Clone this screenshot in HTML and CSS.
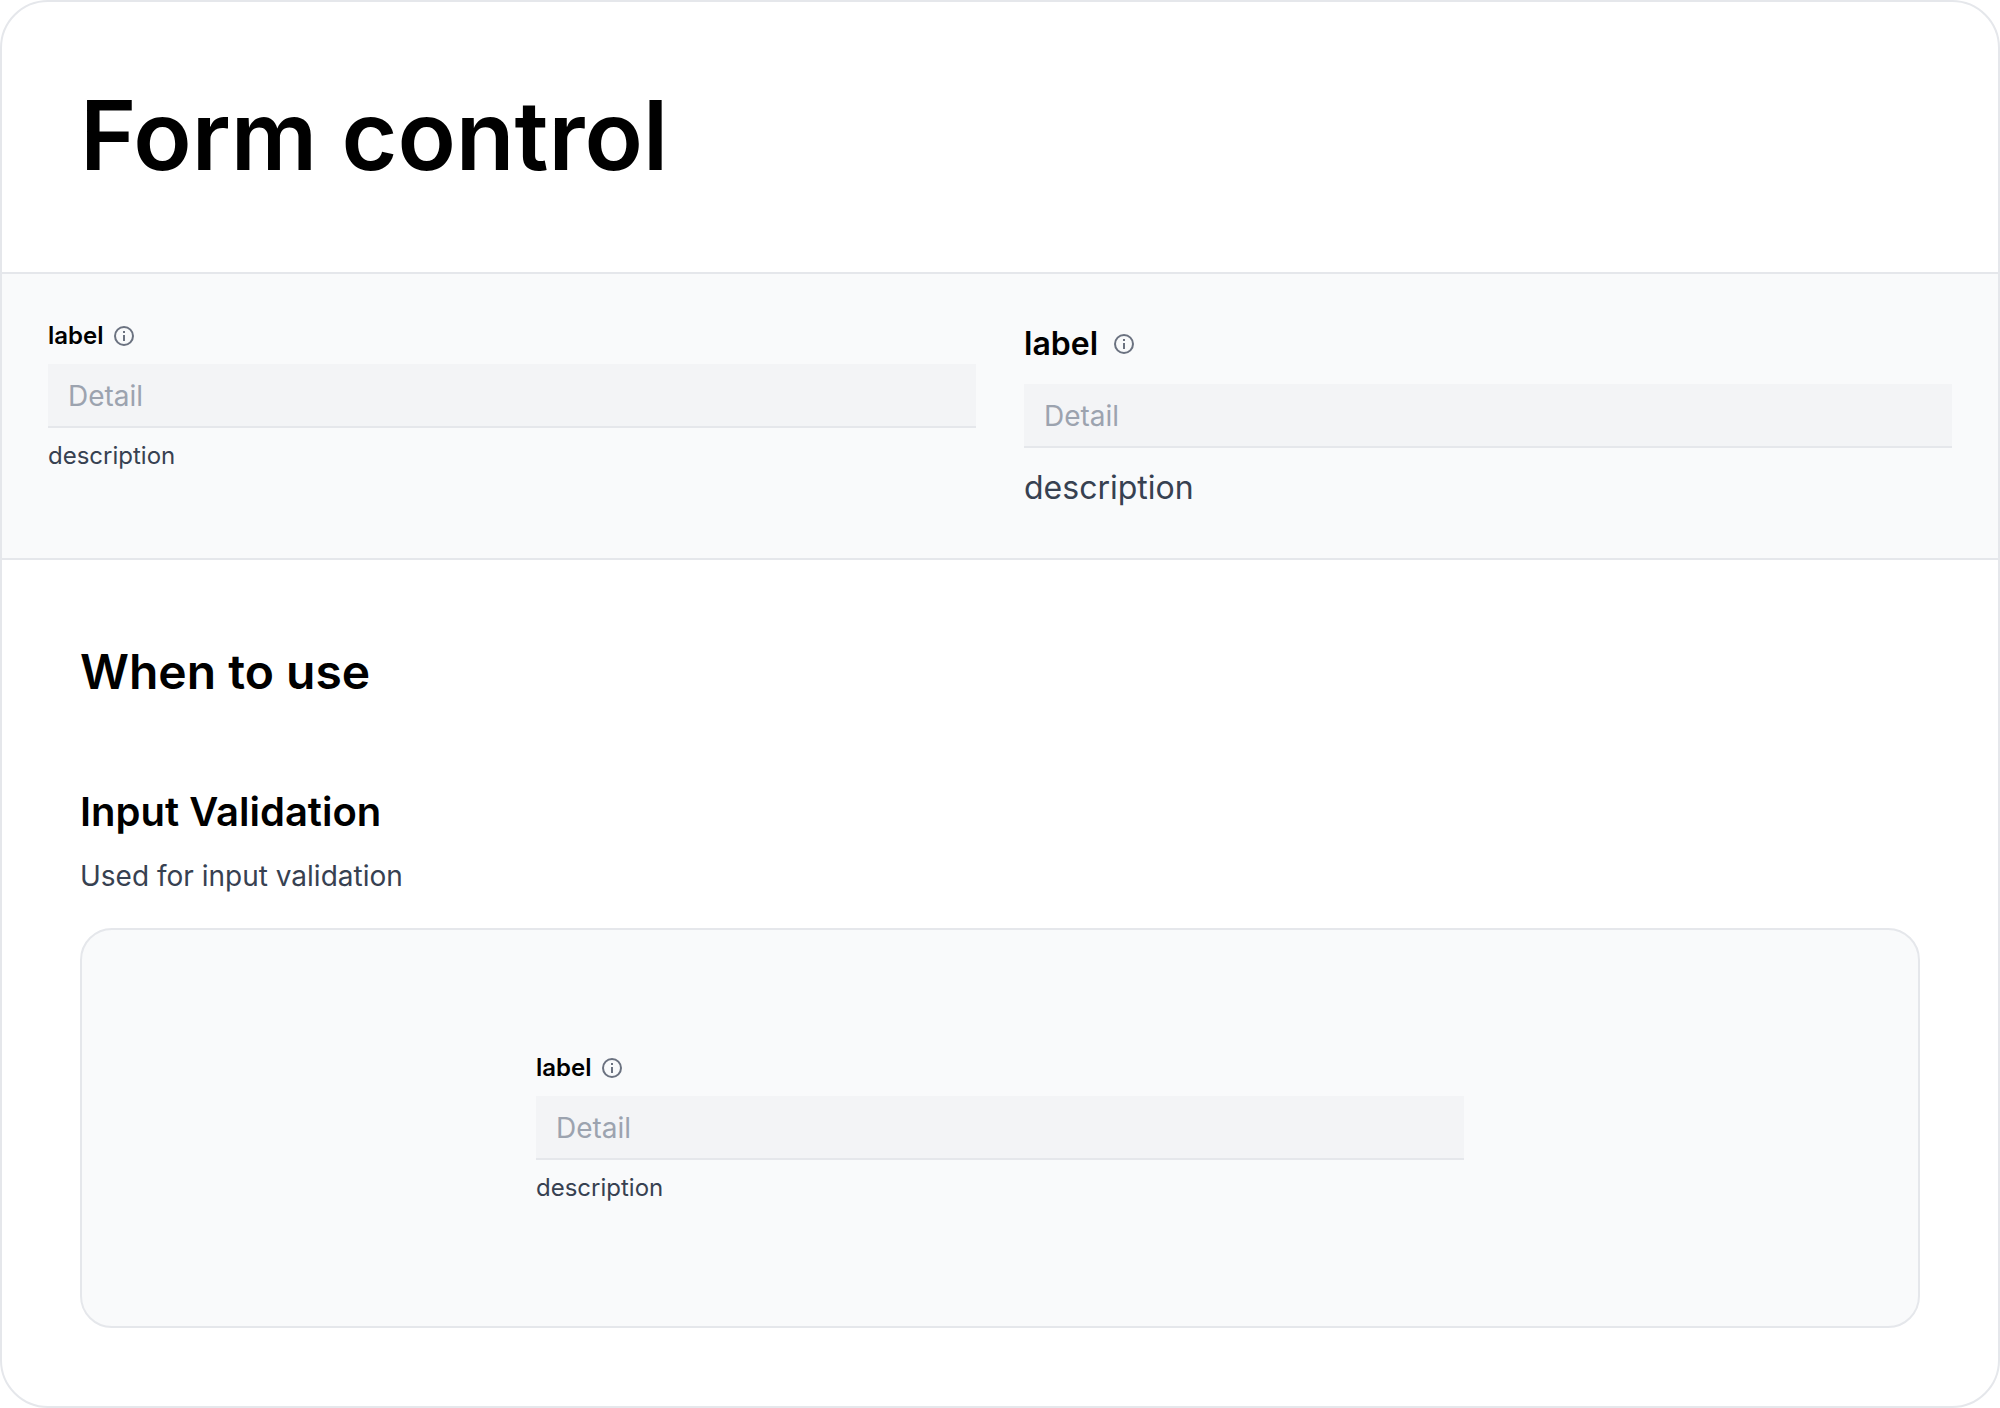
FILE: index.html
```html
<!DOCTYPE html>
<html lang="en">
<head>
  <meta charset="UTF-8" />
  <meta name="viewport" content="width=device-width, initial-scale=1.0"/>
  <title>Form control</title>
  <link rel="stylesheet" href="styles.css">
</head>
<body>
  <main class="card">
    <header class="card-header">
      <h1>Form control</h1>
    </header>

    <section class="preview">
      <div class="field">
        <div class="field-label">
          <label for="detail-small">label</label>
          <svg class="info" viewBox="0 0 24 24" aria-hidden="true">
            <circle cx="12" cy="12" r="9" fill="none" stroke="currentColor" stroke-width="2"/>
            <path d="M11 7h2v2h-2zM11 11h2v6h-2z" fill="currentColor"/>
          </svg>
        </div>
        <input type="text" id="detail-small" placeholder="Detail">
        <p class="description">description</p>
      </div>

      <div class="field field-large">
        <div class="field-label">
          <label for="detail-large">label</label>
          <svg class="info" viewBox="0 0 24 24" aria-hidden="true">
            <circle cx="12" cy="12" r="9" fill="none" stroke="currentColor" stroke-width="2"/>
            <path d="M11 7h2v2h-2zM11 11h2v6h-2z" fill="currentColor"/>
          </svg>
        </div>
        <input type="text" id="detail-large" placeholder="Detail">
        <p class="description">description</p>
      </div>
    </section>

    <section class="usage">
      <h2>When to use</h2>
      <h3>Input Validation</h3>
      <p class="usage-text">Used for input validation</p>

      <div class="example">
        <div class="field">
          <div class="field-label">
            <label for="detail-example">label</label>
            <svg class="info" viewBox="0 0 24 24" aria-hidden="true">
              <circle cx="12" cy="12" r="9" fill="none" stroke="currentColor" stroke-width="2"/>
              <path d="M11 7h2v2h-2zM11 11h2v6h-2z" fill="currentColor"/>
            </svg>
          </div>
          <input type="text" id="detail-example" placeholder="Detail">
          <p class="description">description</p>
        </div>
      </div>
    </section>
  </main>
</body>
</html>
```
FILE: styles.css
```css
* {
  box-sizing: border-box;
  margin: 0;
  padding: 0;
}

body {
  font-family: 'Inter', sans-serif;
  background: #fff;
  color: #000;
}

.card {
  border: 2px solid #e5e7eb;
  border-radius: 48px;
  overflow: hidden;
}

.card-header {
  padding: 78px 78px 82px;
}

h1, h2, h3 {
  font-weight: 600;
}

h1 {
  font-size: 96px;
  line-height: 110px;
}

h2 {
  font-size: 48px;
  line-height: 64px;
  margin-bottom: 80px;
}

h3 {
  font-size: 40px;
  line-height: 56px;
  margin-bottom: 16px;
}

/* Size preview */
.preview {
  display: grid;
  grid-template-columns: 1fr 1fr;
  gap: 48px;
  padding: 46px;
  background: #f9fafb;
  border-top: 2px solid #e5e7eb;
  border-bottom: 2px solid #e5e7eb;
}

.field {
  display: flex;
  flex-direction: column;
  gap: 12px;
  font-size: 24px;
  line-height: 32px;
}

.field-large {
  gap: 16px;
  font-size: 32px;
  line-height: 48px;
}

.field-label {
  display: flex;
  align-items: center;
  gap: 8px;
  font-weight: 600;
}

.field-large .field-label {
  gap: 14px;
}

.info {
  width: 24px;
  height: 24px;
  color: #6b7280;
}

input[type="text"] {
  width: 100%;
  height: 64px;
  padding: 2px 20px 0;
  border: none;
  border-bottom: 2px solid #e5e7eb;
  background: #f3f4f6;
  color: #000;
  font-family: inherit;
  font-size: 28px;
}

input[type="text"]::placeholder {
  color: #9ca3af;
}

input[type="text"]:focus {
  outline: none;
  border-color: #6b7280;
}

.description {
  color: #374151;
}

/* When to use */
.usage {
  padding: 80px 78px 78px;
}

.usage-text {
  color: #374151;
  font-size: 28px;
  line-height: 40px;
  margin-bottom: 32px;
}

.example {
  display: flex;
  justify-content: center;
  padding: 122px 78px;
  background: #f9fafb;
  border: 2px solid #e5e7eb;
  border-radius: 32px;
}

.example .field {
  width: 100%;
  max-width: 928px;
}

/* Responsive Design */
@media (max-width: 900px) {
  .preview {
    grid-template-columns: 1fr;
  }

  h1 {
    font-size: 48px;
    line-height: 64px;
  }

  .example {
    padding: 46px;
  }
}
```
